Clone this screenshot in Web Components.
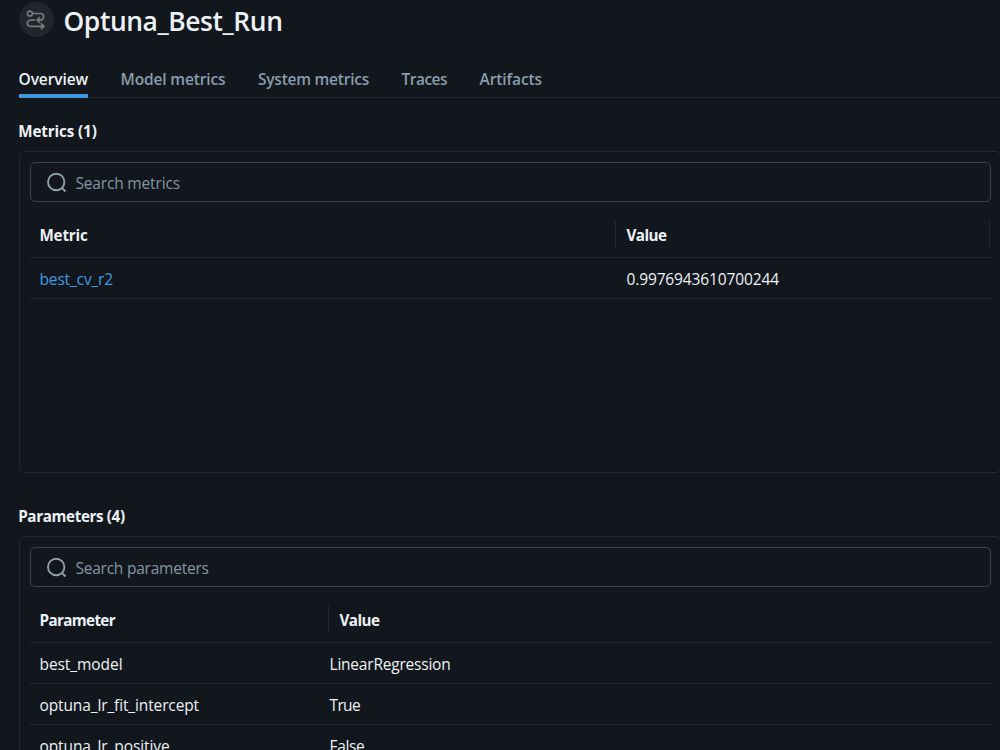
<!DOCTYPE html>
<html lang="en">
<head>
<meta charset="utf-8">
<title>Optuna_Best_Run</title>
<style>
  html { background: #11171c; }
  body { margin: 0; height: 750px; overflow: hidden; background: #11171c; color: #edf1f5;
    font: 15.5px/20px "Open Sans", "Noto Sans", sans-serif; }
</style>
</head>
<body>
<run-page></run-page>
<script>
const define = (name, html, setup) => customElements.define(name, class extends HTMLElement {
  connectedCallback() {
    if (this.shadowRoot) return;
    const t = document.createElement('template');
    t.innerHTML = html;
    this.attachShadow({ mode: 'open' }).append(t.content.cloneNode(true));
    if (setup) setup(this, this.shadowRoot);
  }
});

// Text label tracked so that it takes the width given in its w attribute.
define('fit-text', `<style>:host{display:inline-block;white-space:pre}</style><span><slot></slot></span>`,
  (el, root) => {
    const span = root.querySelector('span');
    const n = el.textContent.length;
    const gap = (Number(el.getAttribute('w')) - span.getBoundingClientRect().width) / n;
    el.style.letterSpacing = gap.toFixed(3) + 'px';
  });

define('run-icon', `<style>
  :host{display:flex;width:35px;height:35px;border-radius:50%;background:#1f272d;align-items:center;justify-content:center;flex:none}
  svg{display:block;margin-right:2px}</style>
  <svg width="20" height="20" viewBox="0 0 20 20" fill="none" stroke="#7a7a7a" stroke-width="1.7">
    <circle cx="3.9" cy="3.6" r="2.5"/>
    <path d="M6.4 3.5H14.4a3.2 3.2 0 0 1 0 6.6H11.4M14 7.2 11 10.1 14 13"/>
    <path d="M9 10.1H4.4a3.1 3.1 0 0 0 0 6.2H17M14.9 13.4 17.8 16.3 14.9 19.2"/>
  </svg>`);

define('run-header', `<style>
  :host{display:flex;gap:9.5px;height:58px;padding:2px 0 0 19px;align-items:flex-start}
  h1{margin:0;font-size:26.4px;line-height:38px;font-weight:650}</style>
  <run-icon></run-icon><h1><slot></slot></h1>`);

define('tab-item', `<style>
  :host{display:block;box-sizing:border-box;height:38px;padding-top:9px;font-weight:600;color:#8a9cab}
  :host([active]){color:#edf1f5;border-bottom:4px solid #4299e0}</style><slot></slot>`);

define('tab-bar', `<style>
  :host{display:flex;box-sizing:border-box;height:38px;gap:32.5px;padding-left:18.6px;background:linear-gradient(#232b32,#232b32) left 19px bottom/100% 1px no-repeat}
  </style><slot></slot>`);

define('search-box', `<style>
  :host{display:flex;box-sizing:border-box;height:40px;border:1px solid #37444f;border-radius:5px;padding-left:15px;gap:8.4px;align-items:center;color:#8396a5}
  svg{display:block;flex:none}
  .label{padding-top:2px}</style>
  <svg width="21" height="21" viewBox="0 0 21 21" fill="none" stroke="#8f9fae" stroke-width="1.9"><circle cx="10.2" cy="10" r="8.2"/><path d="M15.8 15.8 19.5 19.5"/></svg>
  <div class="label"><slot></slot></div>`);

define('table-row', `<style>
  :host{display:flex;box-sizing:border-box;height:41px;border-bottom:1px solid #232b32;padding:2px 0 0 9.5px;align-items:center}
  :host([head]){height:56px;font-size:15.2px;font-weight:700;padding-top:11px}
  .first{width:var(--first);flex:none}
  .second{flex:1}
  :host([head]) .second{display:flex;box-sizing:border-box;align-items:center;height:26px;margin-top:-2px;padding-top:2px;border-left:1px solid #232b32;padding-left:11px;margin-left:var(--shift,-12px)}
  :host([head][closed]) .second{border-right:1px solid #232b32;margin-right:1px}
  </style><div class="first"><slot name="a"></slot></div><div class="second"><slot></slot></div>`);

define('data-panel', `<style>
  :host{display:block}
  h2{margin:0;font-size:15.2px;line-height:20px;font-weight:700;padding:0 0 10px 18.2px}
  .box{box-sizing:border-box;height:322px;margin:0 -1px 0 19px;border:1px solid #232b32;border-radius:5px;padding:10px 9px 0 10px}
  </style><h2><slot name="title"></slot></h2><div class="box"><slot></slot></div>`);

define('run-page', `<style>
  :host{display:block;height:750px;overflow:hidden}
  .panels{display:grid;gap:33px;padding-top:23px}
  .m{--first:587px}
  .p{--first:290px;--shift:-2px}
  .link{color:#4299e0}</style>
  <run-header><fit-text w="219">Optuna_Best_Run</fit-text></run-header>
  <tab-bar>
    <tab-item active><fit-text w="69.4">Overview</fit-text></tab-item>
    <tab-item><fit-text w="105">Model metrics</fit-text></tab-item>
    <tab-item><fit-text w="111">System metrics</fit-text></tab-item>
    <tab-item><fit-text w="45.5">Traces</fit-text></tab-item>
    <tab-item><fit-text w="62.5">Artifacts</fit-text></tab-item>
  </tab-bar>
  <div class="panels">
    <data-panel class="m">
      <fit-text slot="title" w="78.5">Metrics (1)</fit-text>
      <search-box><fit-text w="104.5">Search metrics</fit-text></search-box>
      <table-row head closed><fit-text slot="a" w="48">Metric</fit-text><fit-text w="40">Value</fit-text></table-row>
      <table-row><fit-text slot="a" class="link" w="73.5">best_cv_r2</fit-text><fit-text w="152.4">0.9976943610700244</fit-text></table-row>
    </data-panel>
    <data-panel class="p">
      <fit-text slot="title" w="106.5">Parameters (4)</fit-text>
      <search-box><fit-text w="133.3">Search parameters</fit-text></search-box>
      <table-row head><fit-text slot="a" w="75.5">Parameter</fit-text><fit-text w="40">Value</fit-text></table-row>
      <table-row><fit-text slot="a" w="83">best_model</fit-text><fit-text w="121">LinearRegression</fit-text></table-row>
      <table-row><fit-text slot="a" w="159.5">optuna_lr_fit_intercept</fit-text><fit-text w="30.5">True</fit-text></table-row>
      <table-row><fit-text slot="a" w="130">optuna_lr_positive</fit-text><fit-text w="35">False</fit-text></table-row>
    </data-panel>
  </div>`);
</script>
</body>
</html>
